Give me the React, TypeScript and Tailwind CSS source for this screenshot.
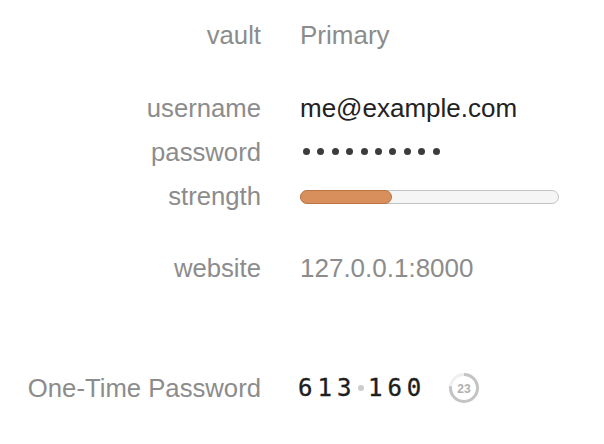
import React from "react";

const sans = { fontFamily: '"Liberation Sans", Arial, sans-serif' };
const mono = { fontFamily: '"DejaVu Sans Mono", Menlo, monospace' };

function Row({ label, children, className = "" }: { label: string; children: React.ReactNode; className?: string }) {
  return (
    <div className={`grid grid-cols-[261px_1fr] gap-x-[39px] h-[44px] items-center ${className}`}>
      <div className="text-right text-[25.7px] leading-[44px] text-[#8c8c8c] whitespace-nowrap" style={sans}>
        {label}
      </div>
      <div className="flex items-center h-[44px]">{children}</div>
    </div>
  );
}

function Countdown({ value, total }: { value: number; total: number }) {
  const r = 13.5;
  const c = 2 * Math.PI * r;
  const remaining = (value / total) * c;
  return (
    <svg width="32" height="32" viewBox="0 0 32 32" className="block">
      <circle cx="16" cy="16" r={r} fill="none" stroke="#efefef" strokeWidth="3" />
      <circle
        cx="16"
        cy="16"
        r={r}
        fill="none"
        stroke="#c4c4c4"
        strokeWidth="3"
        strokeDasharray={`${remaining} ${c}`}
        transform="rotate(-90 16 16)"
      />
      <text
        x="16"
        y="20.5"
        textAnchor="middle"
        fontSize="12"
        fontWeight="700"
        fill="#b0b0b0"
        fontFamily='"Liberation Sans", Arial, sans-serif'
      >
        {value}
      </text>
    </svg>
  );
}

export default function App() {
  return (
    <div className="w-[604px] h-[444px] bg-white pt-[13px] overflow-hidden">
      <Row label="vault">
        <span className="text-[26px] leading-[44px] text-[#8c8c8c]" style={sans}>
          Primary
        </span>
      </Row>
      <div className="mt-[29px]">
        <Row label="username">
          <span className="text-[26px] leading-[44px] text-[#222222]" style={sans}>
            me@example.com
          </span>
        </Row>
        <Row label="password">
          <div className="flex gap-[7.4px] ml-[3px] -mt-[1px]">
            {Array.from({ length: 10 }).map((_, i) => (
              <span key={i} className="block w-[7px] h-[7px] rounded-full bg-[#3c3c3c]" />
            ))}
          </div>
        </Row>
        <Row label="strength">
          <div className="w-[259px] h-[14px] rounded-full border border-[#c4c4c4] bg-[#f5f5f5] relative mt-[2px]">
            <div className="absolute -left-px -top-px h-[14px] w-[92px] rounded-full border border-[#b97543] bg-[#d98f5b]" />
          </div>
        </Row>
      </div>
      <div className="mt-[28px]">
        <Row label="website">
          <span className="text-[26px] leading-[44px] text-[#8c8c8c]" style={sans}>
            127.0.0.1:8000
          </span>
        </Row>
      </div>
      <div className="mt-[76px]">
        <Row label="One-Time Password">
          <div className="flex items-center -ml-[2px] -mt-[1px]">
            <span className="text-[24px] leading-[30px] tracking-[5px] text-[#1e1e1e] [-webkit-text-stroke:0.35px_#1e1e1e]" style={mono}>
              613
            </span>
            <span className="block w-[6px] h-[6px] rounded-full bg-[#cccccc] ml-[1.6px] mt-[1px]" />
            <span className="ml-[4px] text-[24px] leading-[30px] tracking-[5px] text-[#1e1e1e] [-webkit-text-stroke:0.35px_#1e1e1e]" style={mono}>
              160
            </span>
            <span className="ml-[21.6px]">
              <Countdown value={23} total={30} />
            </span>
          </div>
        </Row>
      </div>
    </div>
  );
}
